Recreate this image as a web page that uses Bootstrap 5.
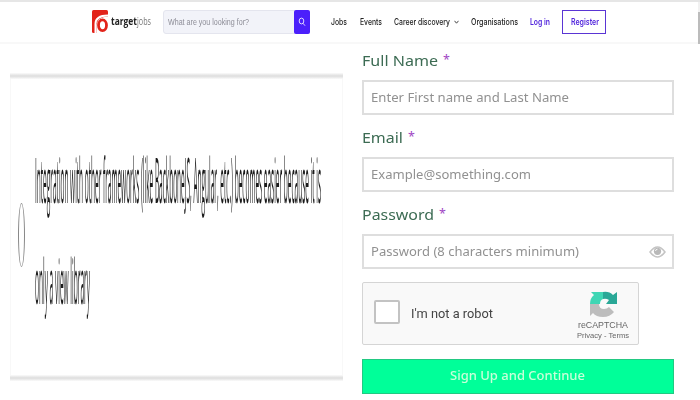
<!DOCTYPE html>
<html lang="en">
<head>
<meta charset="utf-8">
<meta name="viewport" content="width=device-width, initial-scale=1">
<title>targetjobs</title>
<link rel="stylesheet" href="https://cdn.jsdelivr.net/npm/bootstrap@5.3.0/dist/css/bootstrap.min.css">
<style>
body{height:400px;overflow:hidden;background:#fff;font-family:"Noto Sans",sans-serif;line-height:1}
.fit{display:block;white-space:nowrap;flex:none;text-align:left}
.fit>span{display:inline-block;transform-origin:0 50%}
.topbar{height:44px;border-top:2px solid #e6e6e6;border-bottom:2px solid #f8f8f8;padding:0 0 0 92px;position:relative}
.logo{width:16px;height:23px;margin-top:-1px}
.brandword{font:700 10px/14px "Open Sans",sans-serif;color:#222;margin:-2px 0 0 3px}
.brandword.thin{font-weight:400;color:#777;margin-left:0}
.searchbox{width:147px;height:24px;background:#f2f3f9;border:1px solid #e4e5ee;border-radius:3px;margin-left:12px}
.searchbox .fit{font:400 9.5px/20px "Liberation Sans",sans-serif;color:#8d8d97;margin-left:4px}
.searchbtn{width:16px;height:24px;background:#4b1ffb;border-radius:2px;margin-left:-16px}
.menu{font:500 9px/14px Inter,sans-serif;color:#222;margin-left:21px}
.menu.next{margin-left:12px}
.menu.first-next{margin-left:13px}
.violet{color:#5125dc;font-weight:600}
.register{width:44px;height:24px;border:1px solid #5a35d4;margin-left:12px;padding-left:8px}
.register .fit{font:600 9px/14px Inter,sans-serif;color:#5125dc}
.scroller{position:absolute;right:0;top:0;width:2px;height:42px;background:linear-gradient(#f1f1f1 10px,#bcbcbc 10px)}
.quiz{width:333px;height:356px;margin-left:10px}
.rule{height:6px;background:linear-gradient(#fbfbfb,#e2e2e2 40%,#e2e2e2 60%,#fbfbfb)}
.rule.upper{margin-top:29px}
.panel{height:296px;border:solid #f8f8f8;border-width:0 1px}
.oval{width:7px;height:64px;border:1px solid #888;border-radius:50%;margin:124px 0 0 7px}
.answer{width:287px;margin:50px 0 0 10px;filter:grayscale(1)}
.answer .fit{height:101px;display:flex;align-items:center;font:400 14px/20px "Open Sans",sans-serif;color:#1c191f}
.form-col{width:312px;margin-left:19px;color:#3c6b53}
.lab{font-size:15px;height:17px;line-height:17px;margin:14px 0 11px}
.lab.top{margin-top:8px}
.star{color:#a045c4;margin:-1px 0 0 5px;font-size:12.5px}
.field{height:35px;border:2px solid #dedede;padding:0 6px 0 7px;color:#919191;font-size:12px}
.captcha{width:277px;height:63px;border:1px solid #d5d5d5;border-radius:2px;background:#f9f9f9;margin-top:13px;padding-left:11px}
.tick{width:26px;height:24px;border:2px solid #c3c3c3;border-radius:2px;background:#fff;margin-top:-3px}
.robot{font:400 13.5px/18px Roboto,sans-serif;color:#444;margin:-2px 0 0 11px}
.mini{font:400 8.5px/11px "Liberation Sans",sans-serif;color:#666;margin-top:2px}
.mini.small2{font-size:7px;line-height:10px;margin-top:0}
.capbrand{width:52px;margin-right:9px;padding-top:8px}
.signup{height:35px;background:#00ff99;border:1px solid #22c982;color:#c8ffd9;font-size:12.5px;font-weight:500;margin-top:14px;border-radius:0;padding:0 0 0 87px}
</style>
<script src="https://cdn.jsdelivr.net/npm/bootstrap@5.3.0/dist/js/bootstrap.bundle.min.js"></script>
</head>
<body>
<nav class="topbar d-flex align-items-center">
  <svg class="logo" viewBox="0 0 16 23"><rect width="16" height="23" rx="1.500" fill="#e2231a"/><path d="M3.500 23V14Q3.500 5.500 16 5.500" fill="none" stroke="#fff" stroke-width="2"/><path d="M16 6.500V23H4.500V15Q5 7 16 6.500Z" fill="#fff"/><ellipse cx="10.500" cy="15.300" rx="4" ry="5.400" fill="none" stroke="#e2231a" stroke-width="2.800"/></svg>
  <div class="fit brandword" data-w="26"><span>target</span></div>
  <div class="fit brandword thin" data-w="14"><span>jobs</span></div>
  <div class="searchbox d-flex align-items-center"><div class="fit" data-w="81"><span>What are you looking for?</span></div></div>
  <button class="searchbtn border-0 p-0 d-flex align-items-center justify-content-center" aria-label="Search"><svg width="8" height="10" viewBox="0 0 8 10" fill="none" stroke="#fff" stroke-width=".8"><ellipse cx="3.500" cy="4" rx="2.300" ry="2.900"/><path d="M5 6.300 7 8.700"/></svg></button>
  <div class="fit menu" data-w="16"><span>Jobs</span></div>
  <div class="fit menu first-next" data-w="22"><span>Events</span></div>
  <div class="fit menu next" data-w="56"><span>Career discovery</span></div>
  <svg class="ms-1" width="5" height="4" viewBox="0 0 5 4" fill="none" stroke="#333" stroke-width=".9"><path d="M.5.8 2.500 3.200 4.500.8"/></svg>
  <div class="fit menu next" data-w="47"><span>Organisations</span></div>
  <div class="fit menu next violet" data-w="20"><span>Log in</span></div>
  <div class="register d-flex align-items-center"><div class="fit" data-w="28"><span>Register</span></div></div>
  <div class="scroller"></div>
</nav>
<main class="d-flex">
  <section class="quiz">
    <div class="rule upper"></div>
    <div class="panel d-flex">
      <div class="oval flex-shrink-0"></div>
      <div class="answer">
        <div class="fit" data-w="286" data-tall="4.5"><span>Integration with other frameworks (like BackboneJS, Angular, etc.) becomes easier because it is</span></div>
        <div class="fit" data-w="55" data-tall="4.5"><span>only a view library</span></div>
      </div>
    </div>
    <div class="rule"></div>
  </section>
  <form class="form-col">
    <div class="lab top d-flex"><div class="fit" data-w="76"><span>Full Name</span></div><span class="star">*</span></div>
    <div class="field d-flex align-items-center"><div class="fit" data-w="198"><span>Enter First name and Last Name</span></div></div>
    <div class="lab d-flex"><div class="fit" data-w="41"><span>Email</span></div><span class="star">*</span></div>
    <div class="field d-flex align-items-center"><div class="fit" data-w="160"><span>Example@something.com</span></div></div>
    <div class="lab d-flex"><div class="fit" data-w="72"><span>Password</span></div><span class="star">*</span></div>
    <div class="field d-flex align-items-center justify-content-between"><div class="fit" data-w="208"><span>Password (8 characters minimum)</span></div>
      <svg width="17" height="12" viewBox="0 0 17 12"><path d="M1 6Q8.500-4 16 6 8.500 16 1 6Z" fill="#fff" stroke="#c4c4c4" stroke-width="1.500"/><circle cx="8.500" cy="5.300" r="3.600" fill="#b8b8b8"/><path d="M6.500 5Q6.700 3.300 8.500 3.200" fill="none" stroke="#fff" stroke-width=".9"/></svg></div>
    <div class="captcha d-flex">
      <div class="tick align-self-center"></div>
      <div class="fit robot align-self-center" data-w="82"><span>I'm not a robot</span></div>
      <div class="capbrand ms-auto d-flex flex-column align-items-center">
        <svg width="29" height="27" viewBox="0 0 29 27"><path d="M1 13Q1 7 5 4L2 1H14V8Q11 9 11 13Z" fill="#3fd6b4"/><path d="M14 1Q20 0 24 4L28 1V13H17L20 9Q17 7 14 8Z" fill="#2aa897"/><path d="M1 13 10 13Q10 18 15 18 18 18 20 16L25 21Q21 26 14 26 7 26 4 22L1 25Z" fill="#bdbdbd"/></svg>
        <div class="fit mini" data-w="50"><span>reCAPTCHA</span></div>
        <div class="fit mini small2" data-w="52"><span>Privacy - Terms</span></div>
      </div>
    </div>
    <button type="button" class="signup d-flex align-items-center w-100"><span class="fit" data-w="135"><span>Sign Up and Continue</span></span></button>
  </form>
</main>
<script>
// Condense or widen each label to its column width; data-tall stretches it vertically.
document.querySelectorAll('.fit').forEach(function (box) {
  var s = box.firstElementChild, w = +box.dataset.w, n = s.getBoundingClientRect().width;
  box.style.width = w + 'px';
  s.style.transform = 'scale(' + w / n + ',' + (box.dataset.tall || 1) + ')';
});
</script>
</body>
</html>
